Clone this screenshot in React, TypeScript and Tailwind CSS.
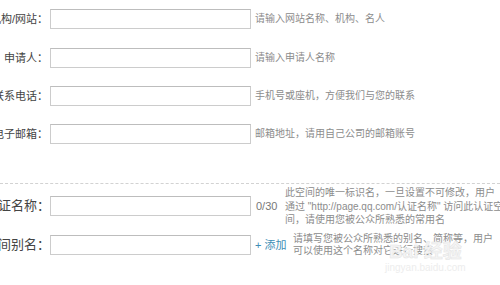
const font = "font-['Liberation_Sans','Noto_Sans_CJK_SC',sans-serif]";

const topRows = [
  { label: "机构/网站：", hint: "请输入网站名称、机构、名人", mt: "mt-[9px]" },
  { label: "申请人：", hint: "请输入申请人名称", mt: "mt-[19px]" },
  { label: "联系电话：", hint: "手机号或座机，方便我们与您的联系", mt: "mt-[18px]" },
  { label: "电子邮箱：", hint: "邮箱地址，请用自己公司的邮箱账号", mt: "mt-[18px]" },
];

function Label({ text, big }: { text: string; big?: boolean }) {
  return (
    <div
      className={
        big
          ? "flex w-[50px] shrink-0 justify-end overflow-hidden whitespace-nowrap text-[13px] leading-[20px] text-[#444]"
          : "flex w-[48px] shrink-0 justify-end overflow-hidden whitespace-nowrap text-[11px] leading-[20px] text-[#444] mr-[2px]"
      }
    >
      <span className="shrink-0">{text}</span>
    </div>
  );
}

function Field() {
  return (
    <input
      type="text"
      className="h-[20px] w-[201px] shrink-0 border border-[#cccccc] border-t-[#bdbdbd] bg-white outline-none"
    />
  );
}

export default function App() {
  return (
    <div className={`relative h-[285px] w-[500px] overflow-hidden bg-white ${font}`}>
      {topRows.map((r) => (
        <div key={r.label} className={`flex items-center ${r.mt}`}>
          <Label text={r.label} />
          <Field />
          <span className="ml-[4px] whitespace-nowrap text-[10px] leading-[20px] text-[#8c8c8c]">
            {r.hint}
          </span>
        </div>
      ))}

      <div className="mt-[39px] border-t border-dashed border-[#d2d2d2]" />

      <div className="mt-[2px] flex items-center">
        <Label text="认证名称：" big />
        <Field />
        <span className="ml-[5px] w-[29px] shrink-0 text-[11px] text-[#777]">0/30</span>
        <div className="whitespace-nowrap text-[10px] leading-[13.5px] text-[#8c8c8c]">
          <div>此空间的唯一标识名，一旦设置不可修改，用户</div>
          <div>通过 "http://page.qq.com/认证名称" 访问此认证空</div>
          <div>间，请使用您被公众所熟悉的常用名</div>
        </div>
      </div>

      <div className="mt-[6px] flex items-center">
        <Label text="空间别名：" big />
        <Field />
        <span className="ml-[4px] w-[38px] shrink-0 whitespace-nowrap text-[11px] text-[#3d8db5]">+ 添加</span>
        <div className="whitespace-nowrap text-[10px] leading-[12.5px] text-[#8c8c8c]">
          <div>请填写您被公众所熟悉的别名、简称等，用户</div>
          <div>可以使用这个名称对它进行搜索</div>
        </div>
      </div>

      {/* faint watermark over the corner */}
      <div className="pointer-events-none absolute left-[385px] top-[242px] flex flex-col items-center">
        <span className="text-[19px] font-bold leading-[20px] text-[#f4f4f4] [-webkit-text-stroke:0.5px_#e4e4e4]">
          Bai 经验
        </span>
        <span className="text-[10px] leading-[12px] text-[#ededed]">jingyan.baidu.com</span>
      </div>
    </div>
  );
}
